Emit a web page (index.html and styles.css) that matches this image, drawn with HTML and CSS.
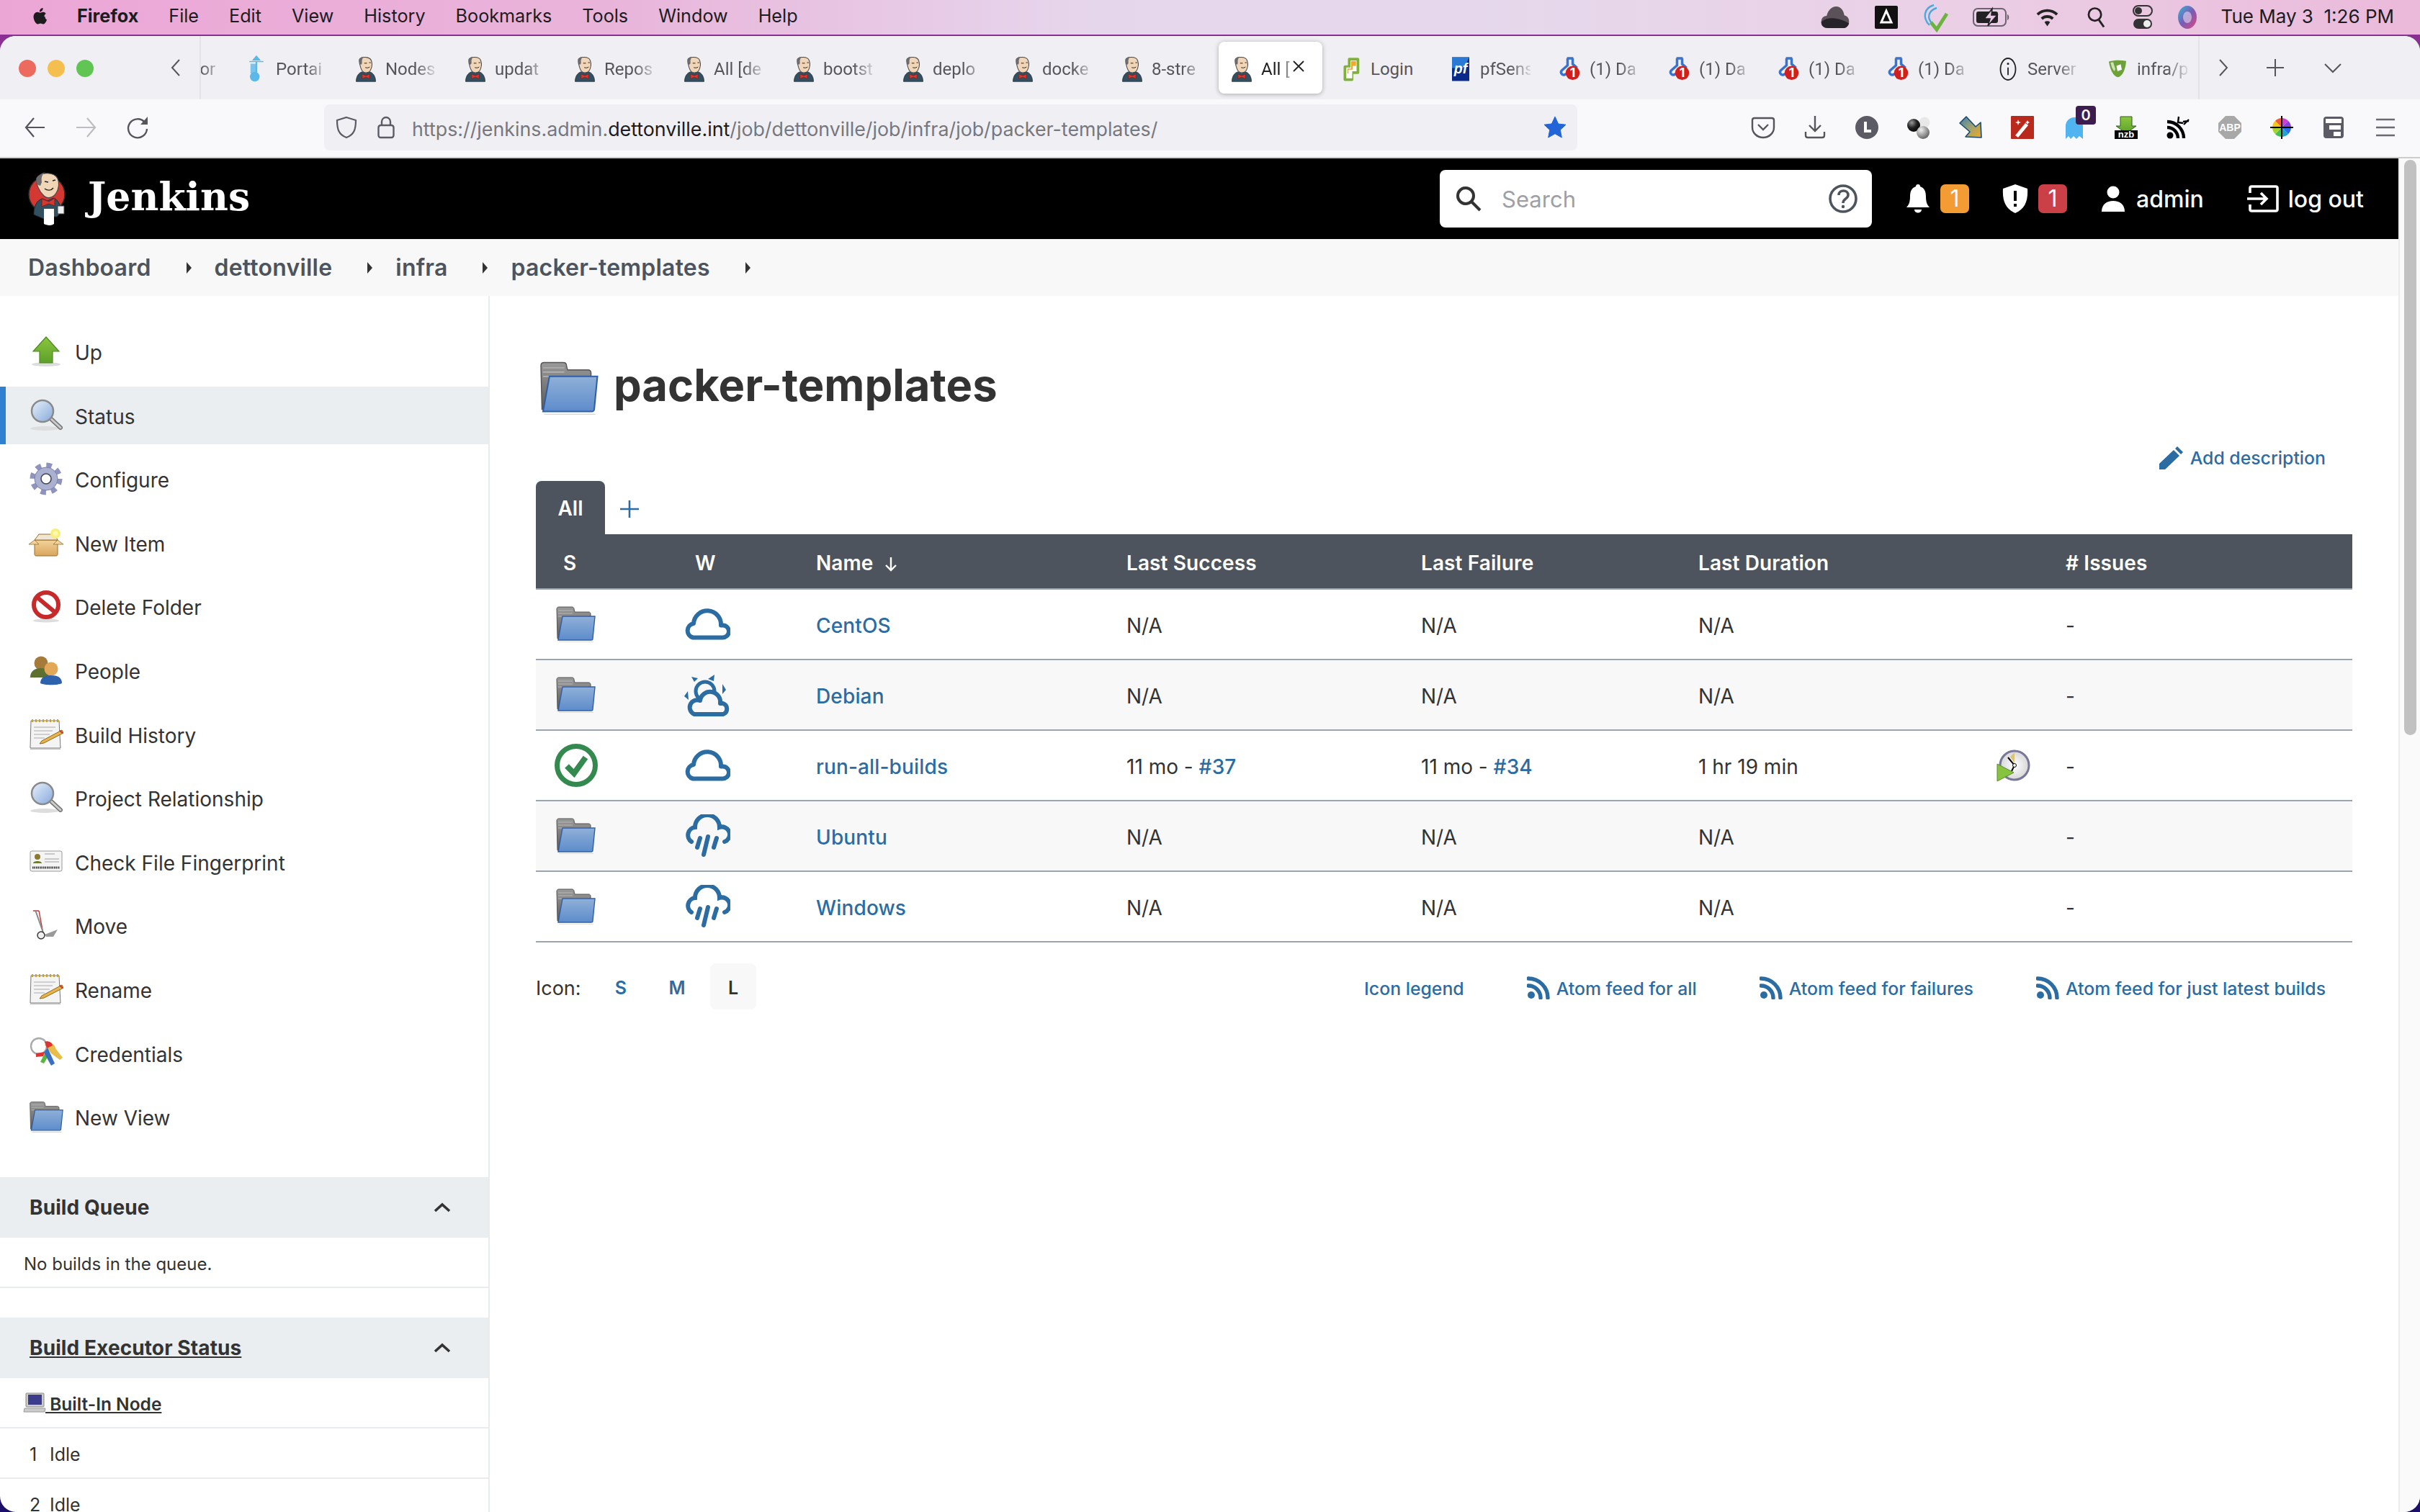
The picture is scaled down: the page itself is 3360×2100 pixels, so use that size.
FILE: index.html
```html
<!DOCTYPE html>
<html lang="en">
<head>
<meta charset="utf-8">
<title>packer-templates [Jenkins]</title>
<link rel="stylesheet" href="styles.css">
</head>
<body>
<svg class="defs" aria-hidden="true">
  <defs>
    <linearGradient id="gBlue" x1="0" y1="0" x2="0" y2="1"><stop offset="0" stop-color="#8fb0d8"/><stop offset="1" stop-color="#5d8ccb"/></linearGradient>
    <linearGradient id="gGray" x1="0" y1="0" x2="0" y2="1"><stop offset="0" stop-color="#9a9a9a"/><stop offset="1" stop-color="#5a5a5a"/></linearGradient>
    <linearGradient id="gGreen" x1="0" y1="0" x2="0" y2="1"><stop offset="0" stop-color="#8cc63f"/><stop offset="1" stop-color="#5ca02a"/></linearGradient>
    <linearGradient id="gGlass" x1="0" y1="0" x2="1" y2="1"><stop offset="0" stop-color="#e8f0fa"/><stop offset="1" stop-color="#86a9dc"/></linearGradient>
    <linearGradient id="gBox" x1="0" y1="0" x2="0" y2="1"><stop offset="0" stop-color="#f2d39c"/><stop offset="1" stop-color="#d9a65c"/></linearGradient>
    <linearGradient id="gArrow" x1="0" y1="0" x2="1" y2="1"><stop offset="0" stop-color="#3d7fb0"/><stop offset=".55" stop-color="#a5a56a"/><stop offset="1" stop-color="#f5a623"/></linearGradient>
    <radialGradient id="gBall" cx=".35" cy=".3" r=".8"><stop offset="0" stop-color="#eee"/><stop offset="1" stop-color="#555"/></radialGradient>
    <radialGradient id="gBallDark" cx=".35" cy=".3" r=".8"><stop offset="0" stop-color="#999"/><stop offset=".5" stop-color="#222"/><stop offset="1" stop-color="#000"/></radialGradient>
    <radialGradient id="gClock" cx=".5" cy=".5" r=".6"><stop offset="0" stop-color="#fff"/><stop offset="1" stop-color="#cfcfcf"/></radialGradient>
    <linearGradient id="gSiri" x1="0" y1="0" x2="1" y2="1"><stop offset="0" stop-color="#35b6d8"/><stop offset=".5" stop-color="#7a5bb5"/><stop offset="1" stop-color="#e0487f"/></linearGradient>
  </defs>
  <symbol id="apple" viewBox="0 0 24 24"><path d="M18.7 12.8c0-2.2 1.8-3.3 1.9-3.3-1-1.5-2.6-1.7-3.2-1.7-1.3-.1-2.6.8-3.3.8s-1.7-.8-2.9-.8c-1.5 0-2.9.9-3.6 2.2-1.6 2.7-.4 6.7 1.1 8.9.8 1.1 1.7 2.3 2.9 2.2 1.1 0 1.6-.7 3-.7s1.8.7 3 .7 2-1.1 2.8-2.2c.9-1.3 1.2-2.5 1.3-2.6-.1 0-2-.8-2-3.3zM16.4 6.2c.6-.8 1.1-1.9.9-3-1 0-2.1.6-2.8 1.4-.6.7-1.1 1.8-1 2.9 1.1.1 2.2-.5 2.9-1.3z" fill="#1c1c1e"/></symbol>
  <symbol id="jk" viewBox="0 0 40 48">
    <path d="M2 47c0-9 4-16 11-18l7 3 7-3c7 2 11 9 11 18z" fill="#335061" stroke="#1d2c36"/>
    <path d="M8 6c3-5 19-6 22 2 2 6 1 14-2 19-3 4-10 5-14 1-3-3-7-16-6-22z" fill="#f0d6b7" stroke="#49464a" stroke-width="1.4"/>
    <path d="M8 6c3-4 5-5 8-5-3 3-4 8-3 12l-2 3-2-2C7 11 7 8 8 6z" fill="#6d6b6d"/>
    <path d="M17 13h5M26 12h3" stroke="#222" stroke-width="1.3"/>
    <path d="M19 21c3 1 6 1 8-1" fill="none" stroke="#222" stroke-width="1.3"/>
    <path d="M13 33l7 3 7-3v9l-7-3-7 3z" fill="#d33833" stroke="#7d1e1b"/>
  </symbol>
  <symbol id="jk-logo" viewBox="0 0 56 76">
    <circle cx="27" cy="32" r="25" fill="#d33833" stroke="#2b2b2b" stroke-width="1.5"/>
    <path d="M9 60c0-12 4-20 12-22l7 3 8-4c7 2 10 10 11 20l-6 6H33v9H23v-6z" fill="#335061" stroke="#1d2c36"/>
    <path d="M13 9c5-8 24-9 29 1 3 7 1 16-2 20-4 7-13 9-18 3C17 28 11 17 13 9z" fill="#f0d6b7" stroke="#49464a" stroke-width="1.2"/>
    <path d="M13 10c3-5 7-8 12-9-5 3-6 9-5 14l-2 5-3-1c-3-3-3-6-2-9z" fill="#6d6b6d"/>
    <path d="M24 14l5 1M35 13l4-1" stroke="#222" stroke-width="1.4"/>
    <path d="M24 24c4 3 9 3 12-1" fill="none" stroke="#222" stroke-width="1.4"/>
    <path d="M20 38l10 4 8-5v11l-8-3-10 4z" fill="#d33833" stroke="#7d1e1b"/>
    <path d="M23 52h14v21c-4 3-10 2-14 0z" fill="#fff"/>
    <path d="M42 48h9v11h-9z" fill="#eee" stroke="#444"/>
  </symbol>
  <symbol id="gh" viewBox="0 0 34 38">
    <path d="M13 2v11l-9 8c-3 3 0 8 4 7l8-4M21 2v9l7 6" fill="none" stroke="#3b73cc" stroke-width="4"/>
    <path d="M12 2h10" stroke="#3b73cc" stroke-width="4"/>
    <circle cx="21" cy="25" r="11" fill="#d11f1f"/>
    <text x="21" y="31" class="gh-num">1</text>
  </symbol>
  <symbol id="folder" viewBox="0 0 56 50">
    <path d="M2 4c0-2 1-3 3-3h18c2 0 3 1 3 3l1 4h19c2 0 3 1 3 3v34H3z" fill="url(#gGray)" stroke="#555"/>
    <path d="M4 6h20M4 10h20M4 14h42" stroke="#b8b8b8" stroke-width="1"/>
    <path d="M10 14h45l-3 31c0 1-1 2-2 2H4z" fill="url(#gBlue)" stroke="#2f5fa8" stroke-width="1.4"/>
    <path d="M5 50h48" stroke="#bbb" stroke-width="1.6" opacity=".6"/>
  </symbol>
  <symbol id="cloud" viewBox="0 0 64 44"><path d="M12 40.500H53A8.500 8.500 0 0 0 54 23.500H51A19 19 0 0 0 13 21A10 10 0 0 0 12 40.500Z" fill="none" stroke="#2b6ca3" stroke-width="6" stroke-linejoin="round"/></symbol>
  <symbol id="rain" viewBox="0 0 64 58">
    <path d="M10 37A11 11 0 0 1 15 17A17 17 0 0 1 49 17A10 10 0 0 1 56 37" fill="none" stroke="#2b6ca3" stroke-width="6" stroke-linecap="round"/>
    <path d="M22 32L18 45M33 30L27 55M45 32L41 45" stroke="#2b6ca3" stroke-width="6" stroke-linecap="round"/>
  </symbol>
  <symbol id="sun" viewBox="0 0 64 60">
    <circle cx="29" cy="25" r="13" fill="none" stroke="#2b6ca3" stroke-width="5"/>
    <path d="M10 5l9 2-5 5zM42 2l-9 6 8 3zM0 32l5-7 1 12zM58 23l-5-8 0 14z" fill="#2b6ca3"/>
    <path d="M14 57H54A8 8 0 0 0 54 42H50A14 14 0 0 0 22 38A10 10 0 0 0 14 57Z" fill="#f8f8f8" stroke="#2b6ca3" stroke-width="6" stroke-linejoin="round"/>
  </symbol>
  <symbol id="rss" viewBox="0 0 32 32"><circle cx="6" cy="26" r="5" fill="#2b6ca3"/><path d="M2 13a17 17 0 0 1 17 17M2 3a27 27 0 0 1 27 27" fill="none" stroke="#2b6ca3" stroke-width="5.4" stroke-linecap="round"/></symbol>
  <symbol id="glass" viewBox="0 0 48 48">
    <ellipse cx="22" cy="42" rx="20" ry="3" fill="#ddd"/>
    <path d="M30 28l14 13" stroke="#777" stroke-width="6" stroke-linecap="round"/><path d="M30 28l14 13" stroke="#ccc" stroke-width="3" stroke-linecap="round"/>
    <circle cx="19" cy="18" r="15" fill="url(#gGlass)" stroke="#8a8a8a" stroke-width="2.5"/>
  </symbol>
  <symbol id="note" viewBox="0 0 48 48">
    <path d="M3 5h39l2 38H2z" fill="#f4f4f4" stroke="#777"/><path d="M2 43h42v2H2z" fill="#bbb"/>
    <path d="M5 3v4M10 3v4M15 3v4M20 3v4M25 3v4M30 3v4M35 3v4M40 3v4" stroke="#c9a227" stroke-width="2"/>
    <path d="M7 14h30M7 19h26M7 24h22M7 29h15" stroke="#aaa"/>
    <path d="M46 18L18 33l-3 4 6-1 27-14z" fill="#e9b44c" stroke="#8a6a1f"/><path d="M44 18l4 4 -2 1-4-4z" fill="#d33833"/>
  </symbol>
</svg>

<div class="screen">
  <header class="menubar">
    <svg class="apple"><use href="#apple"/></svg>
    <nav class="menu">
      <span class="menu-app">Firefox</span><span>File</span><span>Edit</span><span>View</span><span>History</span><span>Bookmarks</span><span>Tools</span><span>Window</span><span>Help</span>
    </nav>
    <div class="status">
      <svg class="st st-cloud" viewBox="0 0 44 34"><path d="M2 24c0-6 4-9 8-9 2-9 8-14 14-14 7 0 11 6 12 13 4 1 7 4 7 9 0 6-4 10-9 10H12C6 33 2 30 2 24z" fill="#5b5158"/><path d="M2 24c8-8 24-8 41 2-2 5-5 7-9 7H12C6 33 2 30 2 24z" fill="#27232a"/></svg>
      <svg class="st st-a" viewBox="0 0 32 32"><rect width="32" height="32" rx="2" fill="#111"/><path d="M16 7l7 16H9z" fill="none" stroke="#fff" stroke-width="3"/><path d="M16 14l3 7h-6z" fill="#111"/></svg>
      <svg class="st st-check" viewBox="0 0 36 38"><path d="M10 30C0 20 2 6 16 2M14 28C6 20 8 10 20 6" fill="none" stroke="#48a8e0" stroke-width="2.4"/><path d="M12 26l8 10 14-22" fill="none" stroke="#6cb33f" stroke-width="5"/></svg>
      <svg class="st st-batt" viewBox="0 0 52 26"><rect x="1" y="1" width="45" height="24" rx="6" fill="none" stroke="#6b6470" stroke-width="2"/><rect x="5" y="5" width="30" height="16" rx="3" fill="#222"/><path d="M48 9c3 1 3 7 0 8z" fill="#6b6470"/><path d="M27 1L16 15h8l-3 10 13-15h-8z" fill="#e9c8e2" stroke="#222" stroke-width="1.6"/></svg>
      <svg class="st st-wifi" viewBox="0 0 34 30"><path d="M3 11a20 20 0 0 1 28 0M9 17a12 12 0 0 1 16 0" fill="none" stroke="#222" stroke-width="4"/><path d="M13 22a6 6 0 0 1 8 0l-4 6z" fill="#222"/></svg>
      <svg class="st st-search" viewBox="0 0 26 30"><circle cx="11" cy="11" r="9" fill="none" stroke="#222" stroke-width="2.8"/><path d="M17 19l7 10" stroke="#222" stroke-width="3"/></svg>
      <svg class="st st-ctrl" viewBox="0 0 28 34"><rect x="1" y="1" width="26" height="14" rx="7" fill="none" stroke="#333" stroke-width="2"/><circle cx="8" cy="8" r="5" fill="#333"/><rect x="1" y="19" width="26" height="14" rx="7" fill="#333"/><circle cx="20" cy="26" r="5" fill="#eee"/></svg>
      <svg class="st st-siri" viewBox="0 0 28 34"><ellipse cx="14" cy="17" rx="13" ry="16" fill="url(#gSiri)"/><ellipse cx="14" cy="17" rx="6" ry="8" fill="#d8c8e8" opacity=".7"/></svg>
      <span class="clock">Tue May 3&nbsp; 1:26 PM</span>
    </div>
  </header>

  <div class="window">
    <div class="tabbar">
      <div class="lights"><i class="light light-r"></i><i class="light light-y"></i><i class="light light-g"></i></div>
      <svg class="chev-left" viewBox="0 0 14 24"><path d="M12 1L2 12l10 11" fill="none" stroke="#55555c" stroke-width="2"/></svg>
      <div class="tabs">
        <div class="tab tab-cut"><svg class="fav"><use href="#jk"/></svg><span class="tab-t">Editor</span></div>
        <div class="tab"><svg class="fav" viewBox="0 0 30 48"><path d="M15 0v8M2 10h26M15 0l-6 7h12z" stroke="#5cb8e8" stroke-width="2" fill="#5cb8e8"/><path d="M4 14h12v18H4z" fill="#5cb8e8" opacity=".8"/><path d="M15 10v26" stroke="#5cb8e8" stroke-width="3"/><circle cx="12" cy="38" r="9" fill="#5cb8e8"/></svg><span class="tab-t">Portai</span></div>
        <div class="tab"><svg class="fav"><use href="#jk"/></svg><span class="tab-t">Nodes</span></div>
        <div class="tab"><svg class="fav"><use href="#jk"/></svg><span class="tab-t">updat</span></div>
        <div class="tab"><svg class="fav"><use href="#jk"/></svg><span class="tab-t">Repos</span></div>
        <div class="tab"><svg class="fav"><use href="#jk"/></svg><span class="tab-t">All [de</span></div>
        <div class="tab"><svg class="fav"><use href="#jk"/></svg><span class="tab-t">bootst</span></div>
        <div class="tab"><svg class="fav"><use href="#jk"/></svg><span class="tab-t">deplo</span></div>
        <div class="tab"><svg class="fav"><use href="#jk"/></svg><span class="tab-t">docke</span></div>
        <div class="tab"><svg class="fav"><use href="#jk"/></svg><span class="tab-t">8-stre</span></div>
        <div class="tab tab-active"><svg class="fav"><use href="#jk"/></svg><span class="tab-t tab-t-short">All [</span><svg class="tab-x" viewBox="0 0 16 16"><path d="M1 1l14 14M15 1L1 15" stroke="#222" stroke-width="1.8"/></svg></div>
        <div class="tab"><svg class="fav" viewBox="0 0 32 48"><path d="M12 3h16c2 0 3 1 3 3v24c0 2-1 3-3 3h-8v10c0 2-1 3-3 3H5c-2 0-3-1-3-3V20c0-2 1-3 3-3h5V6c0-2 1-3 2-3z" fill="#7fb13c"/><rect x="15" y="8" width="11" height="20" fill="#fff"/><rect x="7" y="21" width="11" height="20" fill="#fff"/><path d="M16 9h9v9h-6v7h-8v7h-2v-9h7z" fill="#f0a830"/></svg><span class="tab-t tab-t-plain">Login</span></div>
        <div class="tab"><svg class="fav" viewBox="0 0 32 48"><path d="M0 2h32v44H0z" fill="#0a2a8a"/><path d="M0 2h32L22 22H0z" fill="#2a7ad5"/><text x="16" y="32" class="pf-t">pf</text></svg><span class="tab-t">pfSens</span></div>
        <div class="tab"><svg class="fav"><use href="#gh"/></svg><span class="tab-t">(1) Da</span></div>
        <div class="tab"><svg class="fav"><use href="#gh"/></svg><span class="tab-t">(1) Da</span></div>
        <div class="tab"><svg class="fav"><use href="#gh"/></svg><span class="tab-t">(1) Da</span></div>
        <div class="tab"><svg class="fav"><use href="#gh"/></svg><span class="tab-t">(1) Da</span></div>
        <div class="tab"><svg class="fav" viewBox="0 0 32 48"><ellipse cx="16" cy="24" rx="14" ry="20" fill="none" stroke="#222" stroke-width="2.4"/><path d="M16 21v14" stroke="#222" stroke-width="2.4"/><circle cx="16" cy="14" r="2" fill="#222"/></svg><span class="tab-t">Server</span></div>
        <div class="tab"><svg class="fav" viewBox="0 0 32 48"><path d="M0 10c10-3 22-3 32-1-1 14-6 28-15 30C8 38 2 24 0 10z" fill="#6da13a"/><path d="M14 18l8-3 2 10-8 3z" fill="#fff"/><path d="M3 12c2 8 4 12 7 16l2-4-4-13z" fill="#cfe3b8"/></svg><span class="tab-t">infra/p</span></div>
      </div>
      <div class="tab-actions">
        <svg class="chev-right" viewBox="0 0 14 24"><path d="M2 1l10 11L2 23" fill="none" stroke="#55555c" stroke-width="2"/></svg>
        <svg class="plus" viewBox="0 0 24 24"><path d="M12 0v24M0 12h24" stroke="#55555c" stroke-width="2"/></svg>
        <svg class="chev-down" viewBox="0 0 24 13"><path d="M1 1l11 11L23 1" fill="none" stroke="#55555c" stroke-width="2"/></svg>
      </div>
    </div>

    <div class="toolbar">
      <div class="nav">
        <svg class="nav-i" viewBox="0 0 28 30"><path d="M13 2L2 15l11 13M2 15h26" fill="none" stroke="#55555c" stroke-width="2.2"/></svg>
        <svg class="nav-i" viewBox="0 0 28 30"><path d="M15 2l11 13-11 13M26 15H0" fill="none" stroke="#bcbcc2" stroke-width="2.2"/></svg>
        <svg class="nav-i" viewBox="0 0 28 30"><path d="M23 8A13 13 0 1 0 26 17" fill="none" stroke="#55555c" stroke-width="2.4"/><path d="M27 0v11H17z" fill="#55555c"/></svg>
      </div>
      <div class="urlbar">
        <svg class="shield" viewBox="0 0 30 32"><path d="M15 2l13 4c0 12-2 20-13 24C4 26 2 18 2 6z" fill="none" stroke="#5b5b66" stroke-width="2.2"/></svg>
        <svg class="lock" viewBox="0 0 24 32"><rect x="1.5" y="13" width="21" height="17" rx="3" fill="none" stroke="#5b5b66" stroke-width="2.4"/><path d="M6 13V8a6 6 0 0 1 12 0v5" fill="none" stroke="#5b5b66" stroke-width="2.4"/></svg>
        <span class="url">https://jenkins.admin.<b class="url-host">dettonville.int</b>/job/dettonville/job/infra/job/packer-templates/</span>
        <svg class="star" viewBox="0 0 32 32"><path d="M16 1l4.6 10 10.4 1.2-7.7 7.2 2 10.6-9.3-5.3L6.700 30l2-10.600L1 12.200 11.400 11z" fill="#2165d9" stroke="#2165d9" stroke-linejoin="round"/></svg>
      </div>
      <div class="ext">
        <span class="ext-i"><svg class="ei" viewBox="0 0 32 32"><path d="M4 3h24c2 0 3 1 3 3v10c0 8-7 14-15 14S1 24 1 16V6c0-2 1-3 3-3z" fill="none" stroke="#55555c" stroke-width="2.4"/><path d="M9 12l7 7 7-7" fill="none" stroke="#55555c" stroke-width="2.4"/></svg></span>
        <span class="ext-i"><svg class="ei" viewBox="0 0 32 32"><path d="M16 0v21M8 13l8 8 8-8M3 22v5c0 2 1 3 3 3h20c2 0 3-1 3-3v-5" fill="none" stroke="#55555c" stroke-width="2.4"/></svg></span>
        <span class="ext-i"><svg class="ei" viewBox="0 0 32 32"><circle cx="16" cy="16" r="16" fill="#5b5b66"/><path d="M12 8v15h10v-4h-6V8z" fill="#fff"/></svg></span>
        <span class="ext-i"><svg class="ei" viewBox="0 0 32 32"><circle cx="24" cy="9" r="7.500" fill="#e8e8e8"/><circle cx="9" cy="13" r="9" fill="url(#gBallDark)"/><circle cx="22" cy="23" r="9" fill="url(#gBall)"/></svg></span>
        <span class="ext-i"><svg class="ei" viewBox="0 0 32 32"><path d="M1 10L10 1l13 14 7-6 1 21-22-1 6-7z" fill="url(#gArrow)" stroke="#1e4b70" stroke-width="1.6" stroke-linejoin="round"/></svg></span>
        <span class="ext-i"><svg class="ei" viewBox="0 0 32 32"><rect width="32" height="32" rx="1" fill="#b92a1d"/><path d="M6 27l14-17 4 3L10 30z" fill="#fff"/><path d="M10 5l1 3 3 1-3 1-1 3-1-3-3-1 3-1zM23 6l1 2 2 1-2 1-1 2-1-2-2-1 2-1z" fill="#fff"/></svg></span>
        <span class="ext-i ext-ghost"><svg class="ei" viewBox="0 0 32 32"><path d="M4 32V14a12 12 0 0 1 24 0v18l-5-4-4 4-4-4-4 4-3-4z" fill="#4fb4f0"/></svg><b class="ghost-badge">0</b></span>
        <span class="ext-i"><svg class="ei" viewBox="0 0 32 32"><path d="M8 1h16v13h6L16 24 2 14h6z" fill="url(#gGreen)" stroke="#2e5c18"/><rect x="0" y="20" width="32" height="12" fill="#000"/><text x="16" y="30" class="nzb-t">nzb</text></svg></span>
        <span class="ext-i"><svg class="ei" viewBox="0 0 32 32"><circle cx="5" cy="27" r="4.500" fill="#000"/><path d="M1 16a15 15 0 0 1 15 15M1 8a23 23 0 0 1 23 23" fill="none" stroke="#000" stroke-width="4.400"/><path d="M17 1l-1 8 7 1M31 7l-8 1 1 0M31 5l-7 7" fill="none" stroke="#000" stroke-width="2.400"/></svg></span>
        <span class="ext-i"><svg class="ei" viewBox="0 0 32 32"><path d="M10 0h12l10 10v12L22 32H10L0 22V10z" fill="#a8a8a8"/><text x="16" y="21" class="abp-t">ABP</text></svg></span>
        <span class="ext-i"><svg class="ei" viewBox="0 0 32 32"><path d="M16 16V3a13 13 0 0 1 9 3.800z" fill="#d63ad6"/><path d="M16 16l9-9.200A13 13 0 0 1 29 16z" fill="#8a3ee0"/><path d="M16 16h13a13 13 0 0 1-4 9.200z" fill="#2b6fe8"/><path d="M16 16l9 9.200A13 13 0 0 1 16 29z" fill="#1fa6c9"/><path d="M16 16v13a13 13 0 0 1-9-3.800z" fill="#3fc05a"/><path d="M16 16l-9 9.200A13 13 0 0 1 3 16z" fill="#a6d42e"/><path d="M16 16H3a13 13 0 0 1 4-9.200z" fill="#f5c518"/><path d="M16 16L7 6.800A13 13 0 0 1 16 3z" fill="#ef5b3a"/><path d="M16 0v32M0 16h32" stroke="#000" stroke-width="2"/></svg></span>
        <span class="ext-i"><svg class="ei" viewBox="0 0 32 32"><rect x="2" y="1" width="28" height="30" rx="4" fill="#5b5b66"/><rect x="5" y="4" width="22" height="6" fill="#fff"/><rect x="10" y="13" width="16" height="6" fill="#fff"/><rect x="16" y="22" width="10" height="6" fill="#fff"/></svg></span>
        <span class="ext-i"><svg class="ei" viewBox="0 0 32 32"><path d="M3 5h26M3 16h26M3 27h26" stroke="#6a6a72" stroke-width="2.600"/></svg></span>
      </div>
    </div>

    <div class="page">
      <div class="page-col">
        <div class="jheader">
          <svg class="jlogo"><use href="#jk-logo"/></svg>
          <span class="jname">Jenkins</span>
          <div class="search">
            <svg class="search-i" viewBox="0 0 36 36"><circle cx="14" cy="14" r="11" fill="none" stroke="#333" stroke-width="4"/><path d="M22 22l12 12" stroke="#333" stroke-width="4"/></svg>
            <span class="search-t">Search</span>
            <svg class="help-i" viewBox="0 0 40 40"><circle cx="20" cy="20" r="18" fill="none" stroke="#4d545d" stroke-width="3.600"/><path d="M14 15c0-8 13-8 13 0 0 5-7 5-7 11" fill="none" stroke="#4d545d" stroke-width="3.600"/><circle cx="20" cy="31" r="2.200" fill="#4d545d"/></svg>
          </div>
          <svg class="bell" viewBox="0 0 34 40"><path d="M17 0c2 0 3 1 3 3 6 2 8 7 8 14 0 8 2 12 5 15H1c3-3 5-7 5-15 0-7 2-12 8-14 0-2 1-3 3-3z" fill="#fff"/><path d="M12 35h10c0 6-10 6-10 0z" fill="#fff"/></svg>
          <span class="badge badge-o">1</span>
          <svg class="shieldw" viewBox="0 0 36 40"><path d="M18 0l17 6c1 16-3 28-17 34C4 34 0 22 1 6z" fill="#fff"/><rect x="16" y="9" width="4" height="14" fill="#000"/><rect x="16" y="27" width="4" height="4" fill="#000"/></svg>
          <span class="badge badge-r">1</span>
          <svg class="user" viewBox="0 0 34 36"><circle cx="17" cy="9" r="8.500" fill="#fff"/><path d="M1 36c0-10 7-15 16-15s16 5 16 15z" fill="#fff"/></svg>
          <span class="admin">admin</span>
          <svg class="logout" viewBox="0 0 44 38"><path d="M4 11V4c0-1 1-2 2-2h34c1 0 2 1 2 2v30c0 1-1 2-2 2H6c-1 0-2-1-2-2v-7" fill="none" stroke="#fff" stroke-width="3.600"/><path d="M0 19h26M19 11l8 8-8 8" fill="none" stroke="#fff" stroke-width="3.600"/></svg>
          <span class="logout-t">log out</span>
        </div>

        <div class="crumbs">
          <a class="crumb">Dashboard</a><i class="caret"></i>
          <a class="crumb">dettonville</a><i class="caret"></i>
          <a class="crumb">infra</a><i class="caret"></i>
          <a class="crumb">packer-templates</a><i class="caret"></i>
        </div>

        <div class="body-row">
          <aside class="side">
            <ul class="tasks">
              <li class="task"><svg class="ti" viewBox="0 0 48 48"><ellipse cx="24" cy="42" rx="20" ry="3" fill="#ddd"/><path d="M24 4L42 24H33V40H15V24H6z" fill="url(#gGreen)" stroke="#4f8a21" stroke-width="1.200"/></svg><span>Up</span></li>
              <li class="task task-on"><svg class="ti"><use href="#glass"/></svg><span>Status</span></li>
              <li class="task"><svg class="ti" viewBox="0 0 48 48"><circle cx="24" cy="24" r="18" fill="none" stroke="#8e93c0" stroke-width="9" stroke-dasharray="7.100 7"/><circle cx="24" cy="24" r="16" fill="#aab0d0" stroke="#7c81a8"/><circle cx="24" cy="24" r="7" fill="#fff" stroke="#44475c" stroke-width="1.600"/></svg><span>Configure</span></li>
              <li class="task"><svg class="ti" viewBox="0 0 48 48"><path d="M8 20h32v20c0 1-1 2-2 2H10c-1 0-2-1-2-2z" fill="url(#gBox)" stroke="#9a6c2a"/><path d="M8 20l6-8h22l4 8z" fill="#efe6d4" stroke="#9a6c2a"/><path d="M8 20L0 26h14zM40 20l8 6H34z" fill="#f2d39c" stroke="#9a6c2a" stroke-width=".8"/><circle cx="37" cy="11" r="7" fill="#f9ee7a"/><circle cx="37" cy="11" r="3.500" fill="#fff9b0"/></svg><span>New Item</span></li>
              <li class="task"><svg class="ti" viewBox="0 0 48 48"><ellipse cx="24" cy="44" rx="18" ry="2.500" fill="#ddd"/><circle cx="24" cy="22" r="17" fill="#fff" stroke="#c62a2a" stroke-width="6"/><path d="M12 12l24 20" stroke="#c62a2a" stroke-width="6"/></svg><span>Delete Folder</span></li>
              <li class="task"><svg class="ti" viewBox="0 0 48 48"><circle cx="17" cy="14" r="9.500" fill="#a67a3a"/><path d="M2 34c0-9 6-13 15-13s14 4 14 13z" fill="#5d7030"/><circle cx="31" cy="22" r="9.500" fill="#e2a858"/><path d="M16 42c0-8 6-11 15-11s15 3 15 11c-6 3-24 3-30 0z" fill="#2f62ad"/></svg><span>People</span></li>
              <li class="task"><svg class="ti"><use href="#note"/></svg><span>Build History</span></li>
              <li class="task"><svg class="ti"><use href="#glass"/></svg><span>Project Relationship</span></li>
              <li class="task"><svg class="ti" viewBox="0 0 48 48"><rect x="2" y="9" width="44" height="28" rx="2" fill="#f4f4f4" stroke="#999"/><circle cx="12" cy="17" r="4" fill="#8a7a30"/><path d="M6 26c0-4 12-4 12 0z" fill="#6d7a30"/><path d="M22 13h14M22 20h20M22 24h20" stroke="#bbb" stroke-width="1.400"/><path d="M5 32h38" stroke="#333" stroke-width="3" stroke-dasharray="1.500 1"/></svg><span>Check File Fingerprint</span></li>
              <li class="task"><svg class="ti" viewBox="0 0 48 48"><path d="M6 4h8M14 4L20 36" stroke="#c33" stroke-width="1.400"/><path d="M9 3l12 34" fill="none" stroke="#888" stroke-width="2"/><path d="M22 37L40 30l-6 10H24z" fill="#999"/><circle cx="17" cy="38" r="5" fill="#eee" stroke="#333" stroke-width="1.400"/></svg><span>Move</span></li>
              <li class="task"><svg class="ti"><use href="#note"/></svg><span>Rename</span></li>
              <li class="task"><svg class="ti" viewBox="0 0 48 48"><circle cx="14" cy="14" r="11" fill="none" stroke="#aaa" stroke-width="2.400"/><path d="M22 12c6-5 14-2 15 5l10 13-4 3-12-9z" fill="#e8bd4a"/><path d="M22 8c4-2 10 0 11 5l-8 4z" fill="#d33"/><path d="M24 20l-8 16 5 2 8-14z" fill="#5cb53d"/><path d="M26 16l10 22-5 3-10-18z" fill="#3a6fc0"/><path d="M10 24l12-2-2 6-10 1z" fill="#d33"/></svg><span>Credentials</span></li>
              <li class="task"><svg class="ti"><use href="#folder"/></svg><span>New View</span></li>
            </ul>

            <section class="pane">
              <div class="pane-h"><span>Build Queue</span><svg class="pane-c" viewBox="0 0 24 14"><path d="M2 12L12 3l10 9" fill="none" stroke="#333" stroke-width="3.600"/></svg></div>
              <div class="pane-r pane-note">No builds in the queue.</div>
            </section>
            <section class="pane">
              <div class="pane-h"><span class="u">Build Executor Status</span><svg class="pane-c" viewBox="0 0 24 14"><path d="M2 12L12 3l10 9" fill="none" stroke="#333" stroke-width="3.600"/></svg></div>
              <div class="pane-r pane-node"><svg class="pc" viewBox="0 0 30 28"><rect x="3" y="1" width="25" height="19" rx="1" fill="#ccc" stroke="#888"/><rect x="6" y="3" width="19" height="14" fill="#3c3c8c"/><path d="M1 22h29l-1 5H0z" fill="#ccc" stroke="#999"/></svg><span class="u node-name">&nbsp;Built-In Node</span></div>
              <div class="pane-r pane-exec"><span class="num">1</span><span>Idle</span></div>
              <div class="pane-r pane-exec"><span class="num">2</span><span>Idle</span></div>
            </section>
          </aside>

          <main class="main">
            <div class="title-row">
              <svg class="title-i"><use href="#folder"/></svg>
              <h1 class="title">packer-templates</h1>
            </div>
            <div class="desc-row">
              <svg class="pencil" viewBox="0 0 34 32"><path d="M0 32v-8L20 5l8 8L8 32zM22 3l3-3 8 8-3 3z" fill="#2b6ca3"/></svg>
              <a class="lnk">Add description</a>
            </div>
            <div class="view-tabs">
              <span class="view-on">All</span>
              <svg class="view-add" viewBox="0 0 26 24"><path d="M13 0v24M0 12h26" stroke="#2b6ca3" stroke-width="2.600"/></svg>
            </div>
            <table class="jobs">
              <colgroup>
                <col class="c-s"><col class="c-w"><col class="c-n"><col class="c-ls"><col class="c-lf"><col class="c-ld"><col class="c-b"><col class="c-i">
              </colgroup>
              <thead>
                <tr><th class="th-s">S</th><th class="th-w">W</th><th>Name <svg class="sort" viewBox="0 0 18 20"><path d="M9 0v18M2 11l7 7 7-7" fill="none" stroke="#fff" stroke-width="2.400"/></svg></th><th>Last Success</th><th>Last Failure</th><th>Last Duration</th><th></th><th># Issues</th></tr>
              </thead>
              <tbody>
                <tr><td class="td-s"><svg class="row-f"><use href="#folder"/></svg></td><td class="td-w"><svg class="w-cloud"><use href="#cloud"/></svg></td><td><a class="job">CentOS</a></td><td>N/A</td><td>N/A</td><td>N/A</td><td></td><td>-</td></tr>
                <tr class="alt"><td class="td-s"><svg class="row-f"><use href="#folder"/></svg></td><td class="td-w"><svg class="w-big"><use href="#sun"/></svg></td><td><a class="job">Debian</a></td><td>N/A</td><td>N/A</td><td>N/A</td><td></td><td>-</td></tr>
                <tr><td class="td-s td-ok"><svg class="ok" viewBox="0 0 60 60"><circle cx="30" cy="30" r="26.500" fill="none" stroke="#348a4e" stroke-width="7"/><path d="M17 31l10 10 16-22" fill="none" stroke="#348a4e" stroke-width="8"/></svg></td><td class="td-w"><svg class="w-cloud"><use href="#cloud"/></svg></td><td><a class="job">run-all-builds</a></td><td>11 mo - <a class="job">#37</a></td><td>11 mo - <a class="job">#34</a></td><td>1 hr 19 min</td><td class="td-b"><svg class="clock-i" viewBox="0 0 46 46"><circle cx="25" cy="23" r="20" fill="url(#gClock)" stroke="#77779a" stroke-width="3"/><path d="M25 5l-6 6 6 9z" fill="#d9c47a"/><path d="M16 12l9 11-4 8" fill="none" stroke="#000" stroke-width="2"/><circle cx="25" cy="23" r="2.500" fill="#fff" stroke="#000"/><path d="M1 21l23 12L1 45z" fill="#86c440" stroke="#5d8a2c"/></svg></td><td>-</td></tr>
                <tr class="alt"><td class="td-s"><svg class="row-f"><use href="#folder"/></svg></td><td class="td-w"><svg class="w-big"><use href="#rain"/></svg></td><td><a class="job">Ubuntu</a></td><td>N/A</td><td>N/A</td><td>N/A</td><td></td><td>-</td></tr>
                <tr><td class="td-s"><svg class="row-f"><use href="#folder"/></svg></td><td class="td-w"><svg class="w-big"><use href="#rain"/></svg></td><td><a class="job">Windows</a></td><td>N/A</td><td>N/A</td><td>N/A</td><td></td><td>-</td></tr>
              </tbody>
            </table>
            <div class="foot">
              <span class="foot-l">Icon:</span>
              <div class="sizes"><a class="size">S</a><a class="size">M</a><span class="size size-on">L</span></div>
              <div class="feeds">
                <a class="lnk">Icon legend</a>
                <span class="feed"><svg class="feed-i"><use href="#rss"/></svg><a class="lnk">Atom feed for all</a></span>
                <span class="feed"><svg class="feed-i"><use href="#rss"/></svg><a class="lnk">Atom feed for failures</a></span>
                <span class="feed"><svg class="feed-i"><use href="#rss"/></svg><a class="lnk">Atom feed for just latest builds</a></span>
              </div>
            </div>
          </main>
        </div>
      </div>
      <div class="sbar"><div class="thumb"></div></div>
    </div>
  </div>
</div>
</body>
</html>
```

FILE: styles.css
```css
* { box-sizing: border-box; }
html, body { margin: 0; width: 3360px; height: 2100px; overflow: hidden; }
body { font-family: Inter, "Liberation Sans", sans-serif; color: #333; background: #1b0f5c; }
.defs { position: absolute; width: 0; height: 0; }
svg { display: block; flex: none; overflow: visible; }
a { color: inherit; text-decoration: none; }

.screen { width: 3360px; height: 2100px; display: flex; flex-direction: column; background: linear-gradient(180deg, #8b2f94 0, #8b2f94 90px, #1b0f6a 1900px); }

/* macOS menu bar */
.menubar { height: 48px; flex: none; display: flex; align-items: center; padding-left: 38px; color: #1c1c1e; font-size: 25.200px; background: linear-gradient(90deg, #eca6d6 0, #e9b4da 25%, #e6d6ec 45%, #e6d8ec 62%, #ead0e6 80%, #ebb9da 100%); }
.apple { width: 30px; height: 34px; margin-right: 39px; margin-top: -4px; }
.menu { display: flex; gap: 42px; padding-bottom: 4px; }
.menu-app { font-weight: 700; }
.status { margin-left: auto; display: flex; align-items: center; padding-right: 36px; }
.st { height: 32px; }
.st-cloud { width: 43px; margin-right: 34px; }
.st-a { width: 32px; margin-right: 34px; }
.st-check { width: 36px; height: 38px; margin-right: 34px; }
.st-batt { width: 52px; height: 26px; margin-right: 35px; }
.st-wifi { width: 33px; height: 30px; margin-right: 39px; }
.st-search { width: 25px; height: 30px; margin-right: 38px; }
.st-ctrl { width: 28px; height: 34px; margin-right: 34px; }
.st-siri { width: 28px; height: 34px; margin-right: 33px; }
.clock { white-space: nowrap; padding-bottom: 4px; font-size: 26px; }

/* browser window */
.window { flex: 1; min-height: 0; margin-top: 1px; border-top: 1px solid #55505a; border-radius: 22px; overflow: hidden; background: #fff; display: flex; flex-direction: column; }
.tabbar { height: 88px; flex: none; background: #f0f0f4; display: flex; align-items: center; }
.lights { display: flex; gap: 16px; margin-left: 26px; margin-top: 2px; }
.light { width: 24px; height: 24px; border-radius: 50%; }
.light-r { background: #ed6a5e; }
.light-y { background: #f5bf4f; }
.light-g { background: #61c554; }
.chev-left { width: 14px; height: 24px; margin-left: 107px; margin-right: 26px; }
.tabs { display: flex; width: 2777px; flex: none; height: 88px; align-items: center; overflow: hidden; border-left: 2px solid #e3e3e8; border-right: 2px solid #e3e3e8; }
.tab { width: 144px; height: 72px; margin: 0 4px; flex: none; display: flex; align-items: center; padding-left: 17px; border-radius: 8px; font-family: Roboto, sans-serif; font-size: 24px; color: #55555c; }
.tab-cut { margin-left: -107px; }
.tab-cut .tab-t { margin-left: 6px; }
.fav { width: 30px; height: 36px; margin-top: 4px; margin-right: 12px; }
.tab-t { width: 70px; overflow: hidden; white-space: nowrap; -webkit-mask-image: linear-gradient(90deg, #000 60%, rgba(0, 0, 0, .15)); mask-image: linear-gradient(90deg, #000 60%, rgba(0, 0, 0, .15)); margin-top: 4px; }
.tab-t-plain { -webkit-mask-image: none; mask-image: none; }
.tab-t-short { width: 44px; color: #222; }
.tab-active { background: #fff; box-shadow: 0 1px 6px rgba(0, 0, 0, .3); }
.tab-x { width: 16px; height: 16px; margin-top: -4px; }
.gh-num { font: 700 20px Inter, sans-serif; fill: #fff; text-anchor: middle; }
.pf-t { font: italic 700 26px "Liberation Sans", sans-serif; fill: #fff; text-anchor: middle; }
.tab-actions { display: flex; align-items: center; }
.chev-right { width: 14px; height: 24px; margin-left: 26px; }
.plus { width: 24px; height: 24px; margin-left: 53px; }
.chev-down { width: 24px; height: 13px; margin-left: 56px; }

.toolbar { height: 82px; flex: none; background: #f9f9fb; border-bottom: 2px solid #ccc; display: flex; align-items: center; padding-bottom: 2px; }
.nav { display: flex; gap: 44px; padding-left: 34px; width: 450px; }
.nav-i { width: 28px; height: 30px; }
.urlbar { width: 1740px; height: 64px; background: #f0f0f4; border-radius: 8px; display: flex; align-items: center; padding-left: 16px; padding-right: 15px; }
.shield { width: 30px; height: 32px; }
.lock { width: 24px; height: 32px; margin-left: 28px; margin-right: 24px; }
.url { font-size: 26.800px; color: #77777e; white-space: nowrap; margin-top: 4px; }
.url-host { font-weight: 400; color: #1c1b22; }
.star { width: 32px; height: 32px; margin-left: auto; }
.ext { display: flex; margin-left: 222px; }
.ext-i { width: 72px; display: flex; justify-content: center; position: relative; }
.ei { width: 32px; height: 32px; }
.ghost-badge { position: absolute; left: 38px; top: -14px; width: 28px; height: 26px; border-radius: 4px; background: #3c1d4f; color: #fff; font-size: 20px; font-weight: 600; text-align: center; line-height: 26px; }
.nzb-t { font: 700 13px "Liberation Sans", sans-serif; fill: #fff; text-anchor: middle; }
.abp-t { font: 700 14px "Liberation Sans", sans-serif; fill: #fff; text-anchor: middle; }

/* page */
.page { flex: 1; min-height: 0; display: flex; }
.page-col { flex: 1; min-width: 0; display: flex; flex-direction: column; }
.sbar { width: 30px; flex: none; background: #fafafa; border-left: 2px solid #ececec; padding: 2px 5px 0 6px; }
.thumb { height: 799px; background: #c1c1c1; border-radius: 9px; }

.jheader { height: 112px; flex: none; background: #000; display: flex; align-items: center; color: #fff; }
.jlogo { width: 56px; height: 76px; margin-left: 38px; }
.jname { font: 700 53.600px "DejaVu Serif", serif; margin-left: 28px; margin-bottom: 6px; }
.search { width: 600px; height: 80px; margin-left: auto; background: #fff; border-radius: 8px; display: flex; align-items: center; padding-left: 22px; padding-right: 20px; }
.search-i { width: 36px; height: 36px; }
.search-t { font-size: 31px; color: #9fa0a5; margin-left: 28px; }
.help-i { width: 40px; height: 40px; margin-left: auto; }
.bell { width: 34px; height: 40px; margin-left: 47px; }
.badge { width: 40px; height: 40px; border-radius: 7px; text-align: center; font-size: 32px; line-height: 40px; color: #fff; margin-left: 14px; }
.badge-o { background: #f39c34; }
.badge-r { background: #cb4047; }
.shieldw { width: 36px; height: 40px; margin-left: 46px; }
.user { width: 34px; height: 36px; margin-left: 47px; }
.admin { font-size: 32px; font-weight: 500; margin-left: 15px; }
.logout { width: 44px; height: 38px; margin-left: 60px; }
.logout-t { font-size: 32px; font-weight: 500; margin-left: 13px; }
.jheader > :last-child { margin-right: 48px; }

.crumbs { height: 79px; flex: none; background: #f8f8f8; display: flex; align-items: center; padding-left: 39px; font-size: 32px; font-weight: 600; color: #4d545d; letter-spacing: .2px; }
.caret { width: 0; height: 0; border-left: 7px solid #333; border-top: 8px solid transparent; border-bottom: 8px solid transparent; margin: 0 32px 0 49px; }

.body-row { flex: 1; min-height: 0; display: flex; }
.side { width: 680px; flex: none; border-right: 2px solid #e9ecef; overflow: hidden; padding-top: 37px; }
.tasks { list-style: none; margin: 0; padding: 0; display: flex; flex-direction: column; gap: 8.600px; }
.task { height: 80px; display: flex; align-items: center; padding-left: 40px; font-size: 28px; color: #333; }
.task span { margin-left: 16px; margin-top: 4px; }
.task-on { background: #eaeef1; border-left: 8px solid #2f80d0; padding-left: 32px; }
.ti { width: 48px; height: 48px; }
.pane { margin-top: 41px; }
.tasks + .pane { margin-top: 44.200px; }
.pane-h { height: 84px; background: #eaeef1; display: flex; align-items: center; justify-content: space-between; padding: 0 52px 0 41px; font-size: 28px; font-weight: 700; color: #333; letter-spacing: .1px; }
.u { text-decoration: underline; }
.pane-c { width: 24px; height: 14px; }
.pane-r { height: 70px; border-bottom: 2px solid #e9ecef; display: flex; align-items: center; padding-left: 33px; padding-top: 4px; font-size: 24px; color: #333; }
.pane-node { font-weight: 600; font-size: 24.500px; }
.pc { width: 30px; height: 28px; margin-top: -4px; }
.pane-exec { font-size: 25px; }
.pane-exec .num { width: 36px; padding-left: 8px; }
.main { flex: 1; min-width: 0; padding: 91px 64px 0; }
.title-row { display: flex; align-items: center; height: 74px; }
.title-i { width: 89px; height: 74px; margin-left: 1px; }
.title { margin: -8px 0 0 18px; font-size: 61.500px; font-weight: 700; color: #333; line-height: 74px; }
.desc-row { margin-top: 42px; height: 36px; display: flex; align-items: center; justify-content: flex-end; padding-right: 37px; }
.pencil { width: 34px; height: 32px; margin-right: 9px; }
.lnk { font-size: 24.800px; font-weight: 500; color: #2b6ca3; white-space: nowrap; }
.view-tabs { margin-top: 14px; height: 74px; display: flex; align-items: center; }
.view-on { width: 96px; height: 74px; background: #4d545d; color: #fff; font-size: 28px; font-weight: 600; border-radius: 8px 8px 0 0; text-align: center; line-height: 76px; }
.view-add { width: 26px; height: 24px; margin-left: 21px; margin-top: 4px; }
.jobs { width: 2522px; table-layout: fixed; border-collapse: separate; border-spacing: 0; font-size: 28px; }
.c-s { width: 186px; }
.c-w { width: 183px; }
.c-n { width: 431px; }
.c-ls { width: 409px; }
.c-lf { width: 385px; }
.c-ld { width: 414px; }
.c-b { width: 96px; }
.c-i { width: 418px; }
.jobs th { height: 77px; background: #4d545d; color: #fff; font-weight: 600; text-align: left; padding: 4px 0 0 20px; border-bottom: 2px solid #9aa5b1; white-space: nowrap; letter-spacing: .1px; }
.jobs .th-s { padding-left: 38px; }
.jobs .th-w { padding-left: 35px; }
.sort { display: inline-block; width: 18px; height: 20px; margin-left: 8px; vertical-align: -2px; }
.jobs td { height: 98px; padding: 4px 0 0 20px; border-bottom: 2px solid #9aa5b1; }
.alt td { background: #f8f8f8; }
.jobs .td-s { padding: 0 0 0 27px; }
.jobs .td-w, .jobs .td-b { padding-top: 0; }
.jobs .td-ok { padding-left: 26px; }
.row-f { width: 56px; height: 50px; }
.w-cloud { width: 64px; height: 44px; }
.w-big { width: 64px; height: 60px; }
.ok { width: 60px; height: 60px; }
.clock-i { width: 46px; height: 46px; }
.job { color: #2b6ca3; font-weight: 500; letter-spacing: .15px; }
.foot { margin-top: 29px; display: flex; align-items: center; height: 64px; font-size: 27px; }
.foot-l { width: 86px; margin-top: 5px; }
.sizes { display: flex; gap: 14px; }
.size { width: 64px; height: 64px; display: flex; align-items: center; justify-content: center; font-size: 25px; font-weight: 600; color: #2b6ca3; border-radius: 8px; padding-top: 3px; }
.size-on { background: #f8f8f8; color: #333; }
.feeds { margin-left: auto; display: flex; align-items: center; gap: 87px; padding-right: 37px; }
.feeds .lnk { margin-top: 5px; }
.feed { display: flex; align-items: center; }
.feed-i { width: 32px; height: 32px; margin-right: 9px; margin-top: 3px; }
```
